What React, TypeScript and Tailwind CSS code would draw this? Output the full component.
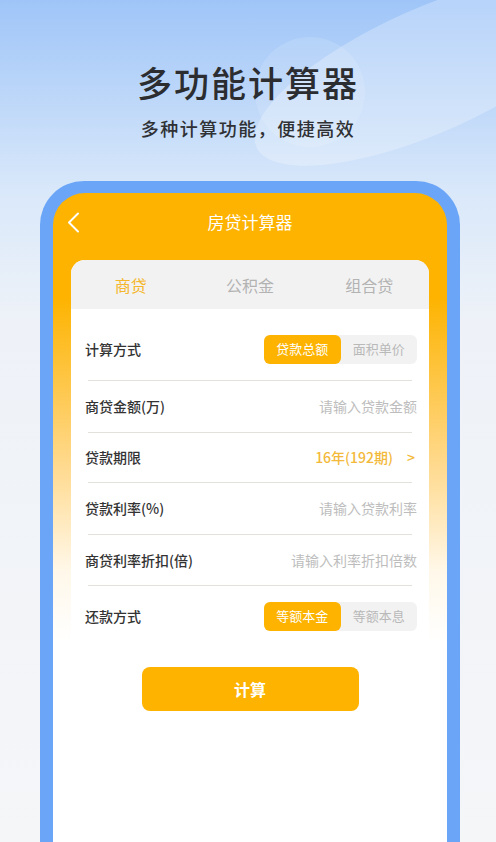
import React, { useState } from 'react';

const font = { fontFamily: '"Noto Sans CJK SC", "Noto Sans", sans-serif' };

type Row = {
  label: string;
  h: string;
  kind: 'seg' | 'input' | 'select';
  options?: string[];
  placeholder?: string;
  value?: string;
};

const rows: Row[] = [
  { label: '计算方式', h: 'h-[62px]', kind: 'seg', options: ['贷款总额', '面积单价'] },
  { label: '商贷金额(万)', h: 'h-[51px]', kind: 'input', placeholder: '请输入贷款金额' },
  { label: '贷款期限', h: 'h-[49px]', kind: 'select', value: '16年(192期)' },
  { label: '贷款利率(%)', h: 'h-[51px]', kind: 'input', placeholder: '请输入贷款利率' },
  { label: '商贷利率折扣(倍)', h: 'h-[50px]', kind: 'input', placeholder: '请输入利率折扣倍数' },
  { label: '还款方式', h: 'h-[60px]', kind: 'seg', options: ['等额本金', '等额本息'] },
];

const tabs = ['商贷', '公积金', '组合贷'];

const Segmented: React.FC<{ options: string[] }> = ({ options }) => {
  const [active, setActive] = useState(0);
  return (
    <div className="flex h-[29px] w-[153px] rounded-[6px] bg-[#f2f2f2]">
      {options.map((o, i) => (
        <button
          key={o}
          onClick={() => setActive(i)}
          className={`flex-1 rounded-[6px] text-[13px] ${
            active === i ? 'bg-[#fdb300] text-white' : 'text-[#b9b9b9]'
          }`}
        >
          {o}
        </button>
      ))}
    </div>
  );
};

export default function App() {
  const [tab, setTab] = useState(0);

  return (
    <div
      style={font}
      className="relative h-[842px] w-full overflow-hidden bg-[linear-gradient(180deg,#9fc5f8_0%,#d9e8fa_190px,#eef2f8_320px,#f5f6f8_100%)]"
    >
      {/* background decoration */}
      <svg className="absolute left-0 top-0" width="496" height="200" viewBox="0 0 496 200">
        <ellipse cx="430" cy="70" rx="190" ry="62" transform="rotate(-24 430 70)" fill="#ffffff" fillOpacity="0.26" />
        <circle cx="310" cy="92" r="55" fill="#ffffff" fillOpacity="0.12" />
      </svg>

      <div className="relative flex flex-col items-center pt-[62px]">
        <h1 className="text-[35px] font-medium leading-[40px] tracking-[2px] text-[#2b2d31]">多功能计算器</h1>
        <p className="mt-[14px] text-[18px] font-medium leading-[24px] tracking-[1.5px] text-[#2f3135]">多种计算功能，便捷高效</p>
      </div>

      {/* phone frame */}
      <div className="relative ml-[40px] mr-[36px] mt-[41px] h-[700px] rounded-t-[44px] bg-[#6aa5f8] px-[13px] pt-[12px]">
        <div className="h-full rounded-t-[32px] bg-[linear-gradient(180deg,#fdb300_0px,#fdb300_105px,#ffd98c_270px,#fff8ea_380px,#ffffff_450px)]">
          <div className="relative flex h-[58px] items-center justify-center">
            <svg className="absolute left-[14px] top-[19px]" width="13" height="21" viewBox="0 0 13 21">
              <path d="M11 1.5 L2 10.5 L11 19.5" fill="none" stroke="#ffffff" strokeWidth="2" strokeLinecap="round" strokeLinejoin="round" />
            </svg>
            <span className="text-[17px] text-white">房贷计算器</span>
          </div>

          <div className="mx-[18px] mt-[9px] overflow-hidden rounded-t-[14px] bg-white">
            <div className="grid h-[49px] grid-cols-3 bg-[#f2f2f2]">
              {tabs.map((t, i) => (
                <button
                  key={t}
                  onClick={() => setTab(i)}
                  className={`text-[16px] ${tab === i ? 'text-[#f5b62a]' : 'text-[#b3b3b3]'}`}
                >
                  {t}
                </button>
              ))}
            </div>

            <div className="pt-[9px]">
              {rows.map((r, i) => (
                <div key={r.label}>
                  <div className={`flex ${r.h} items-center justify-between pl-[14px] pr-[12px]`}>
                    <span className="text-[14px] font-medium text-[#333333]">{r.label}</span>
                    {r.kind === 'seg' && <Segmented options={r.options!} />}
                    {r.kind === 'input' && (
                      <input
                        placeholder={r.placeholder}
                        className="w-[160px] bg-transparent text-right text-[14px] text-[#333333] outline-none placeholder:text-[#bdbdbd]"
                        style={font}
                      />
                    )}
                    {r.kind === 'select' && (
                      <span className="pr-[2px] text-[14px] font-medium text-[#f3b93a]">
                        {r.value}
                        <span className="ml-[14px]">&gt;</span>
                      </span>
                    )}
                  </div>
                  {i < rows.length - 1 && <div className="mx-[17px] h-px bg-[#e3e1dc]" />}
                </div>
              ))}
            </div>

            <div className="flex justify-center pt-[21px]">
              <button className="h-[44px] w-[217px] rounded-[8px] bg-[#fdb300] text-[16px] font-bold text-white">
                计算
              </button>
            </div>
          </div>
        </div>
      </div>
    </div>
  );
}
